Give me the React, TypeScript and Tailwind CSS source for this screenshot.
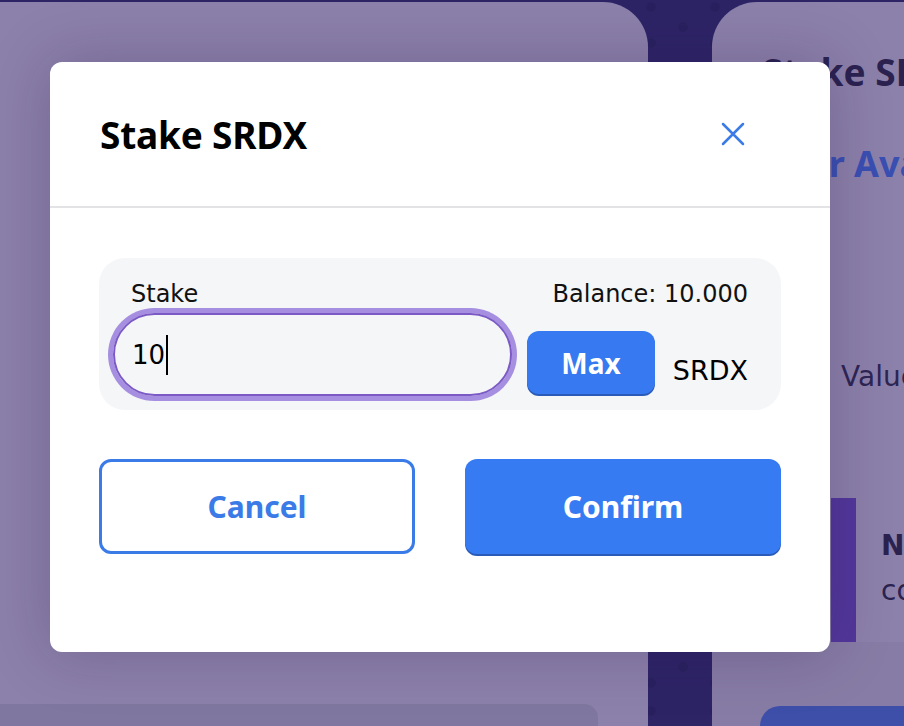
import React from "react";

function Dots() {
  return (
    <svg className="absolute inset-0" width="904" height="726">
      <defs>
        <pattern id="dots" x="0" y="0" width="64" height="64" patternUnits="userSpaceOnUse">
          <circle cx="11" cy="7" r="5" fill="#29215f" />
          <circle cx="43" cy="27" r="5" fill="#29215f" />
          <circle cx="11" cy="43" r="5" fill="#29215f" />
        </pattern>
      </defs>
      <rect width="904" height="726" fill="url(#dots)" />
    </svg>
  );
}

function CloseIcon() {
  return (
    <svg width="24" height="24" viewBox="0 0 24 24" fill="none">
      <path d="M2 2 L22 22 M22 2 L2 22" stroke="#3b7be8" strokeWidth="2.5" strokeLinecap="round" />
    </svg>
  );
}

const reg = "font-['DejaVu_Sans','Noto_Sans',sans-serif]";

export default function App() {
  return (
    <div className="relative w-[904px] h-[726px] overflow-hidden bg-[#2d2466] font-['Noto_Sans',sans-serif]">
      <Dots />
      <div className="relative flex h-full pt-[2px]">
        {/* left panel */}
        <div className="w-[648px] h-full shrink-0 bg-[#8c81aa] rounded-tr-[45px] flex flex-col justify-end">
          <div className="w-[598px] h-[22px] bg-[#8077a0] rounded-tr-[14px]" />
        </div>
        <div className="w-[64px] shrink-0" />
        {/* right column */}
        <div className="w-[192px] h-full shrink-0 flex flex-col">
          <div className="h-[640px] shrink-0 bg-[#8c81aa] rounded-tl-[45px] overflow-hidden flex flex-col whitespace-nowrap">
            <div className="mt-[45px] pl-[50px] text-[37px] leading-[50px] font-bold text-[#2b2250]">Stake SRDX</div>
            <div className="mt-[42px] pl-[50px] text-[36px] leading-[49px] font-bold text-[#3a4fb2]">Your Available</div>
            <div className={`mt-[170px] pl-[129px] text-[28px] leading-[38px] text-[#2e2553] ${reg}`}>Value</div>
            <div className="mt-[102px] flex h-[144px]">
              <div className="ml-[119px] w-[25px] shrink-0 h-full bg-[#52379a]" />
              <div className={`ml-[25px] shrink-0 pt-[29px] text-[28px] leading-[38px] text-[#2b2250] ${reg}`}>
                <div className="font-bold">Note</div>
                <div className="mt-[7px]">contract</div>
              </div>
            </div>
          </div>
          <div className="flex-1 bg-[#877ca5] pt-[64px] pl-[48px]">
            <div className="w-[200px] h-[30px] bg-[#3d4fa9] rounded-t-[20px]" />
          </div>
        </div>
      </div>

      {/* modal */}
      <div className="absolute left-[50px] top-[62px] w-[780px] h-[590px] bg-white rounded-[12px] shadow-[0_0_60px_rgba(40,20,80,0.25)] flex flex-col">
        <div className="h-[146px] shrink-0 flex items-center justify-between pl-[50px] pr-[85px] border-b-2 border-[#e3e3e6]">
          <div className="text-[37px] font-bold text-black mt-[2px] tracking-[-0.2px]">Stake SRDX</div>
          <CloseIcon />
        </div>
        <div className="px-[49px] pt-[50px]">
          <div className="bg-[#f5f6f8] rounded-[26px] pl-[14px] pr-[33px] pt-[22px] pb-[14px]">
            <div className={`flex justify-between h-[28px] leading-[28px] text-[24px] text-[#111] ${reg}`}>
              <span className="pl-[18px]">Stake</span>
              <span>Balance: 10.000</span>
            </div>
            <div className="flex items-end mt-[5px]">
              <div className="w-[399px] h-[83px] shrink-0 rounded-full border-2 border-[#7b5ac6] shadow-[0_0_0_5px_#a68fe0] flex items-center pl-[17px]">
                <span className={`text-[26px] text-black leading-none ${reg}`}>10</span>
                <span className="w-[2px] h-[40px] bg-black ml-[1px]" />
              </div>
              <div className="ml-[15px] mb-[2px] w-[128px] h-[63px] shrink-0 rounded-[12px] bg-[#3679f0] shadow-[0_2px_0_#2a5bb8] flex items-center justify-center text-white font-bold text-[28px]">
                Max
              </div>
              <div className={`ml-auto mb-[6px] text-[27px] text-black leading-[38px] ${reg}`}>SRDX</div>
            </div>
          </div>
          <div className="flex justify-between mt-[49px]">
            <div className="w-[316px] h-[95px] rounded-[12px] border-[3px] border-[#3b7be8] flex items-center justify-center text-[30px] font-bold text-[#3b7be8]">
              Cancel
            </div>
            <div className="w-[316px] h-[95px] rounded-[12px] bg-[#377bf2] shadow-[0_2px_0_#2a5bb8] flex items-center justify-center text-[30px] font-bold text-white">
              Confirm
            </div>
          </div>
        </div>
      </div>
    </div>
  );
}
